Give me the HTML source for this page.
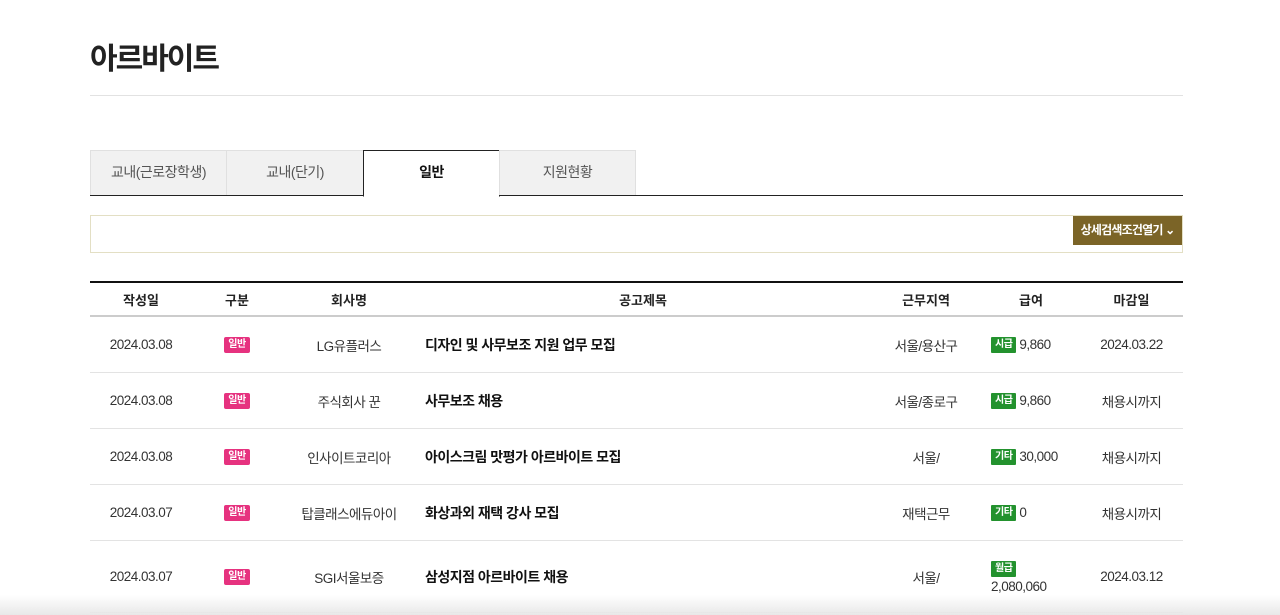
<!DOCTYPE html>
<html><head><meta charset="utf-8"><style>
body{margin:0;background:#fff;font-family:"Liberation Sans","Noto Sans CJK KR",sans-serif;color:#222;width:1280px;height:615px;overflow:hidden;position:relative}
h1{position:absolute;left:90px;top:34px;margin:0;font-size:30px;font-weight:bold;letter-spacing:-2px;color:#222}
.hr{position:absolute;left:90px;width:1093px;top:95px;height:1px;background:#e2e2e2}
.tabs{position:absolute;left:90px;top:150px;width:1093px;height:45px;border-bottom:1px solid #222}
.tab{position:absolute;top:0;height:45px;background:#f1f1f1;border:1px solid #e0e0e0;border-bottom:none;box-sizing:border-box;text-align:center;line-height:42px;font-size:14px;color:#555;letter-spacing:-.5px}
.tab.on{background:#fff;border:1px solid #222;border-bottom:1px solid #fff;height:47px;color:#111;font-weight:bold}
.search{position:absolute;left:90px;top:215px;width:1093px;height:38px;border:1px solid #e3dfc4;box-sizing:border-box}
.btn{position:absolute;right:0;top:0;width:109px;height:29px;background:#7b6427;color:#fff;font-size:12px;font-weight:bold;line-height:29px;text-align:center;letter-spacing:-.8px}
table{position:absolute;left:90px;top:281px;width:1093px;border-collapse:collapse;border-top:2px solid #111;font-size:13.5px}
th{height:32px;padding:0;font-weight:bold;font-size:13px;border-bottom:2px solid #ccc;color:#222}
td{height:55px;padding:0;border-bottom:1px solid #e3e3e3;text-align:center;color:#333;letter-spacing:-.5px}
td.t{text-align:left;font-weight:bold;font-size:14px;color:#111;padding-left:9px}
td.p{text-align:left;padding-left:9px}
.pk{display:inline-block;background:#e6327f;color:#fff;font-size:10px;padding:0 4px;height:16px;line-height:16px;border-radius:2px;font-weight:bold;vertical-align:middle}
.gr{display:inline-block;background:#23922e;color:#fff;font-size:10px;padding:0 4px;height:16px;line-height:16px;border-radius:1px;font-weight:bold;margin-right:3px;vertical-align:middle}
.v{vertical-align:middle}
.shadow{position:absolute;left:0;right:0;top:595px;height:20px;background:linear-gradient(#fff0,#e8e8e8)}
</style></head><body>
<h1>아르바이트</h1>
<div class="hr"></div>
<div class="tabs">
<div class="tab" style="left:0;width:137px">교내(근로장학생)</div>
<div class="tab" style="left:136px;width:138px">교내(단기)</div>
<div class="tab on" style="left:273px;width:137px">일반</div>
<div class="tab" style="left:409px;width:137px">지원현황</div>
</div>
<div class="search"><div class="btn">상세검색조건열기 ⌄</div></div>
<table>
<colgroup><col style="width:102px"><col style="width:90px"><col style="width:134px"><col style="width:454px"><col style="width:112px"><col style="width:98px"><col style="width:103px"></colgroup>
<tr><th>작성일</th><th>구분</th><th>회사명</th><th>공고제목</th><th>근무지역</th><th>급여</th><th>마감일</th></tr>
<tr><td>2024.03.08</td><td><span class="pk">일반</span></td><td>LG유플러스</td><td class="t">디자인 및 사무보조 지원 업무 모집</td><td>서울/용산구</td><td class="p"><span class="gr">시급</span><span class="v">9,860</span></td><td>2024.03.22</td></tr>
<tr><td>2024.03.08</td><td><span class="pk">일반</span></td><td>주식회사 꾼</td><td class="t">사무보조 채용</td><td>서울/종로구</td><td class="p"><span class="gr">시급</span><span class="v">9,860</span></td><td>채용시까지</td></tr>
<tr><td>2024.03.08</td><td><span class="pk">일반</span></td><td>인사이트코리아</td><td class="t">아이스크림 맛평가 아르바이트 모집</td><td>서울/</td><td class="p"><span class="gr">기타</span><span class="v">30,000</span></td><td>채용시까지</td></tr>
<tr><td>2024.03.07</td><td><span class="pk">일반</span></td><td>탑클래스에듀아이</td><td class="t">화상과외 재택 강사 모집</td><td>재택근무</td><td class="p"><span class="gr">기타</span><span class="v">0</span></td><td>채용시까지</td></tr>
<tr><td style="height:71px">2024.03.07</td><td><span class="pk">일반</span></td><td>SGI서울보증</td><td class="t">삼성지점 아르바이트 채용</td><td>서울/</td><td class="p" style="line-height:18px;padding-top:2px"><span class="gr">월급</span><br>2,080,060</td><td>2024.03.12</td></tr>
</table>
<div class="shadow"></div>
</body></html>
